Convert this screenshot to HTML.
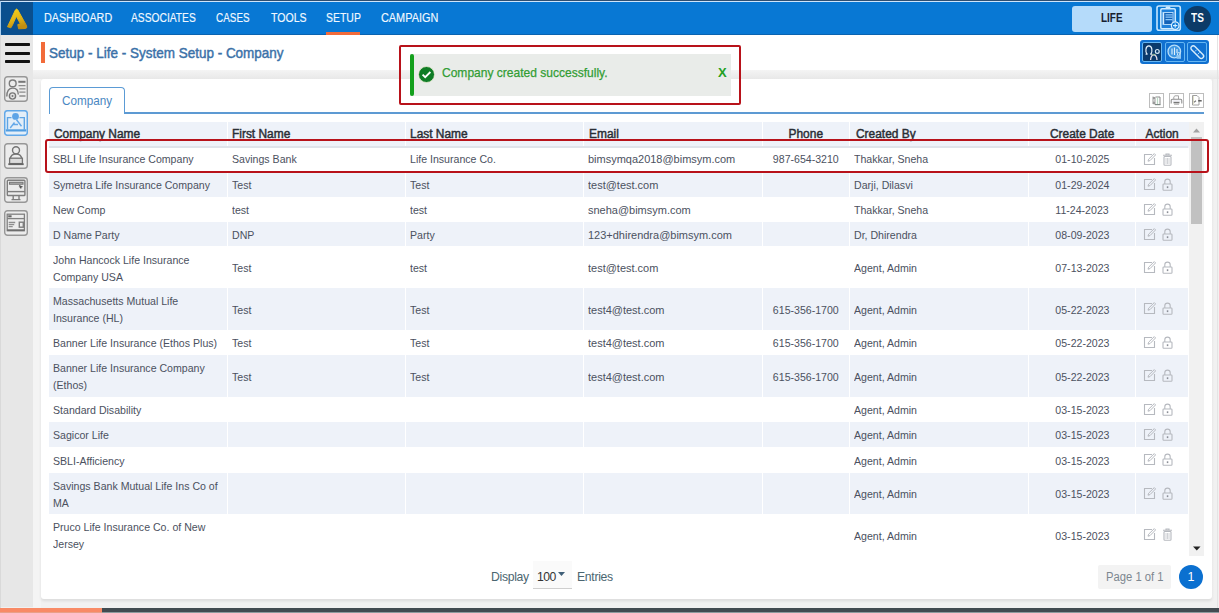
<!DOCTYPE html>
<html><head><meta charset="utf-8">
<style>
*{box-sizing:border-box}
html,body{margin:0;padding:0}
body{width:1219px;height:613px;overflow:hidden;position:relative;background:#f1f1f1;font-family:"Liberation Sans",sans-serif}
.abs{position:absolute}
#tl1{left:0;top:0;width:1219px;height:1px;background:#2f4f72}
#tl2{left:0;top:1px;width:1219px;height:1px;background:#cfe5fb}
#nav{left:0;top:2px;width:1219px;height:33px;background:linear-gradient(#0878d4 32px,#0a63b0 32px)}
#logo{left:1px;top:0;width:32px;height:33px;background:#0a4f8e;overflow:hidden}
.ni{position:absolute;top:8.8px;-webkit-text-stroke:0.15px #f2f8ff;color:#f2f8ff;font-size:12.3px;white-space:nowrap;line-height:14px;transform-origin:0 0}
#ul{left:326px;top:30px;width:34px;height:3px;background:#f26b3a}
#life{left:1072px;top:4px;width:80px;height:26px;background:#b5dbfa;border-radius:3px}
#lifet{left:1100.5px;top:8.7px;color:#15202e;font-weight:bold;font-size:12.3px;line-height:14px;transform:scaleX(0.81);transform-origin:0 0}
#clip{left:1156px;top:3px;width:24px;height:25px}
#ts{left:1184.3px;top:3.8px;width:26.6px;height:26.6px;border-radius:50%;background:#0c3b68}
#tst{left:1190.8px;top:8.7px;color:#fff;font-weight:bold;font-size:12.3px;line-height:14px;transform:scaleX(0.82);transform-origin:0 0}
#side{left:0;top:35px;width:33px;height:572px;background:#e7e7e7}
#sideb{left:33px;top:79px;width:8px;height:529px;background:#f4f4f4}
#hdr{left:33px;top:35px;width:1186px;height:35px;background:#fff}
#grad{left:33px;top:70px;width:1186px;height:9px;background:linear-gradient(#f4f4f4,#e8e8e8)}
.hb{position:absolute;left:5px;width:25px;height:3px;background:#111;border-radius:0.8px}
.sico{position:absolute;left:4px;width:24px;height:26px}
#obar{left:41px;top:42px;width:4px;height:21px;background:#f26b3a}
#title{left:48.5px;top:44.5px;color:#3b71a8;font-size:14.5px;-webkit-text-stroke:0.45px #3b71a8;white-space:nowrap;line-height:17px;transform:scaleX(0.93);transform-origin:0 0}
#grp{left:1140px;top:40px;width:69px;height:24px;background:#1070d0;border-radius:3px}
.gb{position:absolute;top:2px;width:20px;height:20px;border:1.5px solid #66b6f2;border-radius:2px}
#panel{left:41px;top:79px;width:1171px;height:519.5px;background:#fff;border-radius:3px;box-shadow:0 2px 3px rgba(0,0,0,0.09)}
#rshadow{left:1212px;top:79px;width:2px;height:519px;background:linear-gradient(90deg,#e9e9e9,#f0f0f0)}
#rline{left:1217px;top:35px;width:1px;height:573px;background:#e4e4e4}
#lline{left:0;top:35px;width:1px;height:573px;background:#d9d9d9}
#tab{left:49px;top:87px;width:76px;height:27px;border:1px solid #5b9bd5;border-bottom:none;border-radius:4px 4px 0 0;background:#fff}
#tabt{left:61.8px;top:93px;color:#4a87c2;font-size:13px;line-height:15px;transform:scaleX(0.9);transform-origin:0 0}
#tabline{left:124px;top:112px;width:1080px;height:1.6px;background:#5d9ad3}
.exp{position:absolute;top:93px;width:15px;height:15px;border:1.2px solid #bdbdbd}
#thead{left:49px;top:122px;width:1155px;height:26px;background:linear-gradient(90deg,#eef2f9 1140px,#f1f1f1 1140px)}
#thead .hsep{position:absolute;top:0;width:1px;height:24px;background:#fff}
#thead .hc{position:absolute;top:4.8px;font-size:12.3px;color:#2a2e35;-webkit-text-stroke:0.45px #2a2e35;white-space:nowrap;line-height:14px}
#thead .hc span{display:inline-block;transform:scaleX(0.97);transform-origin:0 50%}
#thead .hc.c span{transform-origin:50% 50%}
#thb{left:49px;top:146px;width:1139px;height:2px;background:#dfe3ea}
.row{position:absolute;left:49px;width:1139px}
.sep{position:absolute;top:0;width:1px;height:100%;background:#fff}
.cell{position:absolute;top:0;height:100%;display:flex;align-items:center;padding-left:3.5px;font-size:11.5px;color:#4b5160;line-height:17px;white-space:nowrap}
.cell span{display:inline-block;transform:scaleX(0.92);transform-origin:0 50%}
.cell.c span{transform-origin:50% 50%}
.cell.em span{transform:scaleX(0.955)}
.cell.c{justify-content:center;padding-left:0}
.cell.act{justify-content:flex-start;padding-left:6.6px}
.cell.act svg{margin-right:6.6px}
#track{left:1189px;top:122px;width:15px;height:434px;background:#f1f1f1}
#thumb{left:1191px;top:137.4px;width:11px;height:86.6px;background:#c1c1c1}
#redrow{left:45px;top:139px;width:1164px;height:34px;border:2px solid #b8121a;border-radius:3px}
#toastbox{left:399px;top:45px;width:342px;height:60px;border:2px solid #b8121a;border-radius:2px}
#toast{left:410px;top:54px;width:321px;height:42px;background:#e9ece9}
#tbar{left:410px;top:54px;width:4px;height:42px;background:#13a01c;border-radius:2px}
#tmsg{left:441.5px;top:66px;color:#329d34;-webkit-text-stroke:0.25px #329d34;font-size:12.6px;white-space:nowrap;line-height:14px;transform:scaleX(0.955);transform-origin:0 0}
#tx{left:718px;top:66px;color:#22a022;font-size:13px;font-weight:bold;line-height:14px}
#disp{left:491px;top:569.6px;color:#4b6670;font-size:12.2px;letter-spacing:-0.3px;white-space:nowrap;line-height:14px}
#sel{left:533px;top:561px;width:39px;height:28px;background:#fafafa;border-bottom:1px solid #cfcfcf}
#selt{left:537px;top:569.6px;color:#333;font-size:12.2px;letter-spacing:-0.5px;line-height:14px}
#entr{left:577px;top:569.6px;color:#4b6670;font-size:12.2px;letter-spacing:-0.3px;white-space:nowrap;line-height:14px}
#pg{left:1098px;top:565px;width:73px;height:24px;background:#f3f3f3;border-radius:2px}
#pgt{left:1106.2px;top:569.7px;color:#7d8790;font-size:12.3px;line-height:14px;white-space:nowrap;transform:scaleX(0.915);transform-origin:0 0}
#pn{left:1179.2px;top:565.2px;width:23.8px;height:24px;border-radius:50%;background:#0b70d0;color:#fff;font-size:12.5px;text-align:center;line-height:24px}
#bbar{left:0;top:608px;width:1219px;height:5px;background:linear-gradient(#424b51 3.6px,#8d9a9d 3.6px)}
#obot{left:0;top:608px;width:102px;height:5px;background:linear-gradient(#f88a66 3.6px,#e9a088 3.6px)}
</style></head>
<body>
<div id="tl1" class="abs"></div>
<div id="tl2" class="abs"></div>
<div class="abs" style="left:0;top:1px;width:1px;height:34px;background:#a9cdee;z-index:5"></div>
<div id="nav" class="abs">
  <div id="logo" class="abs">
    <svg width="32" height="33" viewBox="0 0 32 33" style="position:absolute;left:-1px;top:-2px"><defs><linearGradient id="lg" x1="0" y1="0" x2="0.3" y2="1"><stop offset="0" stop-color="#f6d21c"/><stop offset="0.6" stop-color="#e0b416"/><stop offset="1" stop-color="#c08d12"/></linearGradient></defs>
    <path d="M15.4 10 Q16.6 8.2 17.8 10 L26.6 25.8 Q27.6 28.4 25 28.5 L18.6 28.8 L17.8 24.6 L20.4 23.8 L16.3 16.2 L12.4 25.2 L10.9 27.8 L7.5 26.8 Z" fill="url(#lg)" stroke="url(#lg)" stroke-width="1" stroke-linejoin="round"/></svg>
  </div>
  <div class="ni" style="left:43.5px;transform:scaleX(0.875)">DASHBOARD</div>
  <div class="ni" style="left:131.3px;transform:scaleX(0.834)">ASSOCIATES</div>
  <div class="ni" style="left:216px;transform:scaleX(0.806)">CASES</div>
  <div class="ni" style="left:270.5px;transform:scaleX(0.86)">TOOLS</div>
  <div class="ni" style="left:325.5px;transform:scaleX(0.85)">SETUP</div>
  <div class="ni" style="left:380.8px;transform:scaleX(0.885)">CAMPAIGN</div>
  <div id="ul" class="abs"></div>
  <div id="life" class="abs"></div><div id="lifet" class="abs">LIFE</div>
  <div id="clip" class="abs">
    <svg width="26" height="27" viewBox="0 0 26 27" style="position:absolute;left:-0.2px;top:0px"><rect x="1" y="1" width="23.3" height="24.3" rx="2" fill="none" stroke="#c6e6ff" stroke-width="1.6"/><rect x="4.8" y="3.8" width="14.5" height="20" rx="1.2" fill="#1f80da" stroke="#cdeaff" stroke-width="1.5"/><path d="M9 3.7h6l-1.2-2.2h-3.6z" fill="#cdeaff"/><rect x="7" y="7.5" width="10" height="12" fill="#1262b8" stroke="#bfe1fc" stroke-width="0.9"/><path d="M7.6 8v11" stroke="#d6ecff" stroke-width="1.2"/><path d="M9.5 9.8h7M9.5 12.2h7M9.5 14.6h7" stroke="#8ec8f8" stroke-width="1.2"/><circle cx="19.2" cy="20.6" r="3.8" fill="#0b79d8" stroke="#d8efff" stroke-width="1.3"/><path d="M19.2 18.4v4.4M17 20.6h4.4" stroke="#d8efff" stroke-width="1.1"/></svg>
  </div>
  <div id="ts" class="abs"></div><div id="tst" class="abs">TS</div>
</div>
<div id="side" class="abs">
  <div class="hb" style="top:8px"></div>
  <div class="hb" style="top:17px"></div>
  <div class="hb" style="top:25px"></div>
  <!-- icon 1 -->
  <svg class="sico" style="top:41px" viewBox="0 0 24 26"><rect x="0.7" y="0.7" width="22.6" height="24.6" rx="2.8" fill="#ececec" stroke="#979797" stroke-width="1.4"/><circle cx="8.7" cy="7.4" r="3.4" fill="none" stroke="#7c7c7c" stroke-width="1.4"/><path d="M2.8 20.5c0-5.5 2.4-8.4 5.9-8.4s5.6 2.6 5.6 6.4" fill="none" stroke="#7c7c7c" stroke-width="1.4"/><circle cx="8.5" cy="20" r="3.1" fill="#e4e4e4" stroke="#767676" stroke-width="1.4"/><circle cx="8.5" cy="20" r="1" fill="#767676"/><path d="M14.3 5.8h7.2" stroke="#777" stroke-width="2"/><path d="M14.5 9.7h7M15.3 12.9h6.2M15.3 16.2h6.2M15.3 20h6.2" stroke="#8a8a8a" stroke-width="1.3"/></svg>
  <!-- icon 2 -->
  <svg class="sico" style="top:75px" viewBox="0 0 24 26"><rect x="0.7" y="0.7" width="22.6" height="24.6" rx="2.8" fill="#e3eef8" stroke="#62a8e8" stroke-width="1.5"/><path d="M7.5 7.6H3.5v12M15.5 7.6h4.8v12" fill="none" stroke="#5fa5e4" stroke-width="1.4"/><path d="M1.8 20.4h20.4" stroke="#4f9ce0" stroke-width="2.2"/><circle cx="11.5" cy="6.4" r="3.4" fill="#5ea4e6"/><path d="M6.2 18l4.3-5.5M12.5 9.8l5 6.5M9 14.5h5" fill="none" stroke="#64a8e8" stroke-width="1.4"/></svg>
  <!-- icon 3 -->
  <svg class="sico" style="top:108px" viewBox="0 0 24 26"><rect x="0.7" y="0.7" width="22.6" height="24.6" rx="2.8" fill="#ececec" stroke="#979797" stroke-width="1.4"/><circle cx="12" cy="7.3" r="3.5" fill="none" stroke="#747474" stroke-width="1.4"/><path d="M6.2 16c.3-3 2.5-5 5.8-5s5.5 2 5.8 5" fill="none" stroke="#747474" stroke-width="1.4"/><rect x="5.6" y="15.2" width="12.8" height="5.4" fill="#dcdcdc" stroke="#747474" stroke-width="1.3"/><path d="M4.3 21.2h15.4" stroke="#666" stroke-width="1.8"/></svg>
  <!-- icon 4 -->
  <svg class="sico" style="top:142px" viewBox="0 0 24 26"><rect x="0.7" y="0.7" width="22.6" height="24.6" rx="2.8" fill="#ececec" stroke="#979797" stroke-width="1.4"/><rect x="3.3" y="3.2" width="17.6" height="15.3" rx="0.8" fill="none" stroke="#7e7e7e" stroke-width="1.4"/><rect x="5.5" y="5.3" width="13.5" height="1.9" fill="#bbb" stroke="#777" stroke-width="1.1"/><path d="M3.3 14.6h17.6" stroke="#7e7e7e" stroke-width="1.4"/><path d="M9.2 18.5v3.8M15 18.5v3.8M7.5 22.6h9" fill="none" stroke="#7e7e7e" stroke-width="1.4"/><path d="M15 8.6l2.4 1.2-1 .5.9 1.1" fill="none" stroke="#555" stroke-width="1.5"/></svg>
  <!-- icon 5 -->
  <svg class="sico" style="top:175px" viewBox="0 0 24 26"><rect x="0.7" y="0.7" width="22.6" height="24.6" rx="2.8" fill="#ececec" stroke="#979797" stroke-width="1.4"/><rect x="3.2" y="4.2" width="17.2" height="16.5" fill="none" stroke="#808080" stroke-width="1.3"/><path d="M3.2 8.6h17.2" stroke="#808080" stroke-width="1.3"/><path d="M4.2 6.3h3.4" stroke="#666" stroke-width="2"/><path d="M4.7 12.5h6.5M4.7 14.6h5.5M4.7 16.7h4" stroke="#8e8e8e" stroke-width="1.3"/><rect x="15.3" y="12.2" width="4" height="5" fill="none" stroke="#7e7e7e" stroke-width="1.4"/><path d="M3.2 20.2h17.2" stroke="#6e6e6e" stroke-width="1.8"/></svg>
</div>
<div id="hdr" class="abs"></div>
<div id="grad" class="abs"></div>
<div id="sideb" class="abs"></div>
<div id="obar" class="abs"></div>
<div id="title" class="abs">Setup - Life - System Setup - Company</div>
<div id="grp" class="abs">
  <div class="gb" style="left:2px;background:#0b3a6c">
    <svg width="18" height="18" viewBox="0 0 18 18" style="position:absolute;left:0;top:0"><path d="M4 10.8C2.2 8.8 2.4 2.8 5.9 2.8s3.7 6 1.9 8M2.6 11.2h2M7.2 11.2h2" fill="none" stroke="#e6f1fa" stroke-width="1.2"/><circle cx="14.3" cy="8.4" r="1.9" fill="none" stroke="#d6e8f6" stroke-width="1.2"/><path d="M7.6 17c.2-3.2 1.5-5.2 3.2-5.2s3 2 3.2 5.2" fill="none" stroke="#eadfe8" stroke-width="1.3"/><path d="M9.5 12l1.3-.8 1.6.6" stroke="#9ccf9c" stroke-width="1"/></svg>
  </div>
  <div class="gb" style="left:24.5px">
    <svg width="18" height="18" viewBox="0 0 18 18" style="position:absolute;left:0;top:0"><circle cx="8.3" cy="8.5" r="6.3" fill="#3e96e2" stroke="#b8ddf8" stroke-width="1.3"/><path d="M6 5.5v6M8.5 4.5v7.5M11 6v4" stroke="#dff0fc" stroke-width="1.1"/><rect x="10.5" y="12" width="4.5" height="3.8" fill="#8fc6f2"/><path d="M11.5 12v-1.2a1.3 1.3 0 0 1 2.6 0V12" fill="none" stroke="#c8e4fa" stroke-width="1"/></svg>
  </div>
  <div class="gb" style="left:46.5px">
    <svg width="18" height="18" viewBox="0 0 18 18" style="position:absolute;left:0;top:0"><path d="M3.6 3.4a2.3 2.3 0 0 1 3.3 0l8 8a2.3 2.3 0 0 1-3.3 3.3l-8-8a2.3 2.3 0 0 1 0-3.3z" fill="none" stroke="#d8ecfb" stroke-width="1.4"/><path d="M6.8 8.6l2-2M9.6 11.4l2-2" stroke="#a9d3f5" stroke-width="1"/></svg>
  </div>
</div>
<div id="panel" class="abs"></div>
<div id="rshadow" class="abs"></div><div id="rline" class="abs"></div><div id="lline" class="abs"></div>
<div id="tabline" class="abs"></div>
<div id="tab" class="abs"></div><div id="tabt" class="abs">Company</div>
<div class="exp" style="left:1149px">
  <svg width="13" height="13" viewBox="0 0 13 13" style="position:absolute;left:0;top:0"><path d="M2.5 2.5l3 .8v7.5l-3-.8z" fill="#9a9a9a"/><path d="M5.5 3h4.5v7.5H5.5" fill="none" stroke="#8a8a8a" stroke-width="1"/><path d="M7.5 3.5v6.5" stroke="#b9d8c4" stroke-width="1.2"/><path d="M3.2 5.2l1.5 2.5M4.7 5.2l-1.5 2.5" stroke="#eee" stroke-width="0.7"/><path d="M5 10.6h5.5" stroke="#7f8a86" stroke-width="1.2"/></svg>
</div>
<div class="exp" style="left:1169px">
  <svg width="13" height="13" viewBox="0 0 13 13" style="position:absolute;left:0;top:0"><path d="M3.8 5V2.8l1.2-1h3.5V5" fill="none" stroke="#a5a5a5" stroke-width="1"/><path d="M1.2 9.5V6.5a1.2 1.2 0 0 1 1.2-1.2h8.2a1.2 1.2 0 0 1 1.2 1.2v3" fill="none" stroke="#8f8f8f" stroke-width="1.1"/><path d="M2.5 7h8" stroke="#e4e4ee" stroke-width="1"/><path d="M3.5 8.6h6" stroke="#777" stroke-width="1.5"/><path d="M4 10.2h5" stroke="#aaa" stroke-width="1"/></svg>
</div>
<div class="exp" style="left:1189px">
  <svg width="13" height="13" viewBox="0 0 13 13" style="position:absolute;left:0;top:0"><path d="M2.5 1.5h4.5l2 2v7.5h-6.5z" fill="none" stroke="#a0a0a0" stroke-width="1"/><path d="M3.5 2v8.5" stroke="#e0e0c8" stroke-width="1"/><path d="M4 8.2l2-1.5" stroke="#777" stroke-width="1.1"/><path d="M8.2 6.8h3.5" stroke="#555" stroke-width="1.4"/></svg>
</div>
<div id="track" class="abs"></div>
<div id="thead" class="abs">
  <div class="hsep" style="left:178px"></div>
  <div class="hsep" style="left:356px"></div>
  <div class="hsep" style="left:534px"></div>
  <div class="hsep" style="left:713px"></div>
  <div class="hsep" style="left:800px"></div>
  <div class="hsep" style="left:979px"></div>
  <div class="hsep" style="left:1086px"></div>
  <div class="hc" style="left:4.5px"><span>Company Name</span></div>
  <div class="hc" style="left:183px"><span>First Name</span></div>
  <div class="hc" style="left:361px"><span>Last Name</span></div>
  <div class="hc" style="left:539.5px"><span>Email</span></div>
  <div class="hc c" style="left:714px;width:86px;text-align:center"><span>Phone</span></div>
  <div class="hc" style="left:806.5px"><span>Created By</span></div>
  <div class="hc c" style="left:980px;width:106px;text-align:center"><span>Create Date</span></div>
  <div class="hc c" style="left:1087px;width:52px;text-align:center"><span>Action</span></div>
  <svg style="position:absolute;left:1144px;top:5.8px" width="7" height="5" viewBox="0 0 7 5"><path d="M0 4.5L3.5 0.5 7 4.5z" fill="#a3a3a3"/></svg>
</div>
<div id="thb" class="abs"></div>
<div id="thumb" class="abs"></div>
<div class="row" style="top:148.00px;height:24.80px;background:#ffffff"><div class="cell" style="left:0px;width:178px;top:-0.6px"><span>SBLI Life Insurance Company</span></div><div class="cell" style="left:179px;width:177px;top:-0.6px"><span>Savings Bank</span></div><div class="cell" style="left:357px;width:177px;top:-0.6px"><span>Life Insurance Co.</span></div><div class="cell em" style="left:535px;width:178px;top:-0.6px"><span>bimsymqa2018@bimsym.com</span></div><div class="cell c" style="left:714px;width:86px;top:-0.6px"><span>987-654-3210</span></div><div class="cell" style="left:801px;width:178px;top:-0.6px"><span>Thakkar, Sneha</span></div><div class="cell c" style="left:980px;width:106px;top:-0.6px"><span>01-10-2025</span></div><div class="cell act" style="left:1087px;width:52px;top:-1.2px"><svg width="13" height="13" viewBox="0 0 13 13"><path d="M9 1.5H1.5v10h10V5" fill="none" stroke="#b6b9bf" stroke-width="1.1"/><path d="M5 8.2l.6-2L11.3.6l1.3 1.3L7 7.6z" fill="none" stroke="#b6b9bf" stroke-width="1"/></svg><svg width="11" height="13" viewBox="0 0 11 13"><path d="M1 2.3h9M4 2.2V1h3v1.2" fill="none" stroke="#b6b9bf" stroke-width="1.1"/><rect x="2" y="3.5" width="7" height="8.8" rx="0.8" fill="none" stroke="#b6b9bf" stroke-width="1.1"/><path d="M4 5v6M5.5 5v6M7 5v6" stroke="#c4c7cc" stroke-width="0.8"/></svg></div></div>
<div class="row" style="top:172.80px;height:24.40px;background:#eef2f9"><div class="sep" style="left:178px"></div><div class="sep" style="left:356px"></div><div class="sep" style="left:534px"></div><div class="sep" style="left:713px"></div><div class="sep" style="left:800px"></div><div class="sep" style="left:979px"></div><div class="sep" style="left:1086px"></div><div class="cell" style="left:0px;width:178px;top:0.3px"><span>Symetra Life Insurance Company</span></div><div class="cell" style="left:179px;width:177px;top:0.3px"><span>Test</span></div><div class="cell" style="left:357px;width:177px;top:0.3px"><span>Test</span></div><div class="cell em" style="left:535px;width:178px;top:0.3px"><span>test@test.com</span></div><div class="cell c" style="left:714px;width:86px;top:0.3px"><span></span></div><div class="cell" style="left:801px;width:178px;top:0.3px"><span>Darji, Dilasvi</span></div><div class="cell c" style="left:980px;width:106px;top:0.3px"><span>01-29-2024</span></div><div class="cell act" style="left:1087px;width:52px;top:-0.3px"><svg width="13" height="13" viewBox="0 0 13 13"><path d="M9 1.5H1.5v10h10V5" fill="none" stroke="#b6b9bf" stroke-width="1.1"/><path d="M5 8.2l.6-2L11.3.6l1.3 1.3L7 7.6z" fill="none" stroke="#b6b9bf" stroke-width="1"/></svg><svg width="11" height="13" viewBox="0 0 11 13"><path d="M2.8 6V3.8a2.7 2.7 0 0 1 5.4 0V6" fill="none" stroke="#b6b9bf" stroke-width="1.1"/><rect x="1" y="6" width="9" height="6.3" rx="0.8" fill="none" stroke="#b6b9bf" stroke-width="1.1"/><rect x="4.8" y="8.3" width="1.5" height="1.8" fill="#8a8e96"/></svg></div></div>
<div class="row" style="top:197.20px;height:25.00px;background:#ffffff"><div class="cell" style="left:0px;width:178px;top:0.8px"><span>New Comp</span></div><div class="cell" style="left:179px;width:177px;top:0.8px"><span>test</span></div><div class="cell" style="left:357px;width:177px;top:0.8px"><span>test</span></div><div class="cell em" style="left:535px;width:178px;top:0.8px"><span>sneha@bimsym.com</span></div><div class="cell c" style="left:714px;width:86px;top:0.8px"><span></span></div><div class="cell" style="left:801px;width:178px;top:0.8px"><span>Thakkar, Sneha</span></div><div class="cell c" style="left:980px;width:106px;top:0.8px"><span>11-24-2023</span></div><div class="cell act" style="left:1087px;width:52px;top:-0.3px"><svg width="13" height="13" viewBox="0 0 13 13"><path d="M9 1.5H1.5v10h10V5" fill="none" stroke="#b6b9bf" stroke-width="1.1"/><path d="M5 8.2l.6-2L11.3.6l1.3 1.3L7 7.6z" fill="none" stroke="#b6b9bf" stroke-width="1"/></svg><svg width="11" height="13" viewBox="0 0 11 13"><path d="M2.8 6V3.8a2.7 2.7 0 0 1 5.4 0V6" fill="none" stroke="#b6b9bf" stroke-width="1.1"/><rect x="1" y="6" width="9" height="6.3" rx="0.8" fill="none" stroke="#b6b9bf" stroke-width="1.1"/><rect x="4.8" y="8.3" width="1.5" height="1.8" fill="#8a8e96"/></svg></div></div>
<div class="row" style="top:222.20px;height:24.30px;background:#eef2f9"><div class="sep" style="left:178px"></div><div class="sep" style="left:356px"></div><div class="sep" style="left:534px"></div><div class="sep" style="left:713px"></div><div class="sep" style="left:800px"></div><div class="sep" style="left:979px"></div><div class="sep" style="left:1086px"></div><div class="cell" style="left:0px;width:178px;top:0.8px"><span>D Name Party</span></div><div class="cell" style="left:179px;width:177px;top:0.8px"><span>DNP</span></div><div class="cell" style="left:357px;width:177px;top:0.8px"><span>Party</span></div><div class="cell em" style="left:535px;width:178px;top:0.8px"><span>123+dhirendra@bimsym.com</span></div><div class="cell c" style="left:714px;width:86px;top:0.8px"><span></span></div><div class="cell" style="left:801px;width:178px;top:0.8px"><span>Dr, Dhirendra</span></div><div class="cell c" style="left:980px;width:106px;top:0.8px"><span>08-09-2023</span></div><div class="cell act" style="left:1087px;width:52px;top:-0.3px"><svg width="13" height="13" viewBox="0 0 13 13"><path d="M9 1.5H1.5v10h10V5" fill="none" stroke="#b6b9bf" stroke-width="1.1"/><path d="M5 8.2l.6-2L11.3.6l1.3 1.3L7 7.6z" fill="none" stroke="#b6b9bf" stroke-width="1"/></svg><svg width="11" height="13" viewBox="0 0 11 13"><path d="M2.8 6V3.8a2.7 2.7 0 0 1 5.4 0V6" fill="none" stroke="#b6b9bf" stroke-width="1.1"/><rect x="1" y="6" width="9" height="6.3" rx="0.8" fill="none" stroke="#b6b9bf" stroke-width="1.1"/><rect x="4.8" y="8.3" width="1.5" height="1.8" fill="#8a8e96"/></svg></div></div>
<div class="row" style="top:246.50px;height:41.90px;background:#ffffff"><div class="cell" style="left:0px;width:178px;top:1.2px"><span>John Hancock Life Insurance<br>Company USA</span></div><div class="cell" style="left:179px;width:177px;top:1.2px"><span>Test</span></div><div class="cell" style="left:357px;width:177px;top:1.2px"><span>test</span></div><div class="cell em" style="left:535px;width:178px;top:1.2px"><span>test@test.com</span></div><div class="cell c" style="left:714px;width:86px;top:1.2px"><span></span></div><div class="cell" style="left:801px;width:178px;top:1.2px"><span>Agent, Admin</span></div><div class="cell c" style="left:980px;width:106px;top:1.2px"><span>07-13-2023</span></div><div class="cell act" style="left:1087px;width:52px;top:-0.3px"><svg width="13" height="13" viewBox="0 0 13 13"><path d="M9 1.5H1.5v10h10V5" fill="none" stroke="#b6b9bf" stroke-width="1.1"/><path d="M5 8.2l.6-2L11.3.6l1.3 1.3L7 7.6z" fill="none" stroke="#b6b9bf" stroke-width="1"/></svg><svg width="11" height="13" viewBox="0 0 11 13"><path d="M2.8 6V3.8a2.7 2.7 0 0 1 5.4 0V6" fill="none" stroke="#b6b9bf" stroke-width="1.1"/><rect x="1" y="6" width="9" height="6.3" rx="0.8" fill="none" stroke="#b6b9bf" stroke-width="1.1"/><rect x="4.8" y="8.3" width="1.5" height="1.8" fill="#8a8e96"/></svg></div></div>
<div class="row" style="top:288.40px;height:41.80px;background:#eef2f9"><div class="sep" style="left:178px"></div><div class="sep" style="left:356px"></div><div class="sep" style="left:534px"></div><div class="sep" style="left:713px"></div><div class="sep" style="left:800px"></div><div class="sep" style="left:979px"></div><div class="sep" style="left:1086px"></div><div class="cell" style="left:0px;width:178px;top:1.2px"><span>Massachusetts Mutual Life<br>Insurance (HL)</span></div><div class="cell" style="left:179px;width:177px;top:1.2px"><span>Test</span></div><div class="cell" style="left:357px;width:177px;top:1.2px"><span>Test</span></div><div class="cell em" style="left:535px;width:178px;top:1.2px"><span>test4@test.com</span></div><div class="cell c" style="left:714px;width:86px;top:1.2px"><span>615-356-1700</span></div><div class="cell" style="left:801px;width:178px;top:1.2px"><span>Agent, Admin</span></div><div class="cell c" style="left:980px;width:106px;top:1.2px"><span>05-22-2023</span></div><div class="cell act" style="left:1087px;width:52px;top:-0.3px"><svg width="13" height="13" viewBox="0 0 13 13"><path d="M9 1.5H1.5v10h10V5" fill="none" stroke="#b6b9bf" stroke-width="1.1"/><path d="M5 8.2l.6-2L11.3.6l1.3 1.3L7 7.6z" fill="none" stroke="#b6b9bf" stroke-width="1"/></svg><svg width="11" height="13" viewBox="0 0 11 13"><path d="M2.8 6V3.8a2.7 2.7 0 0 1 5.4 0V6" fill="none" stroke="#b6b9bf" stroke-width="1.1"/><rect x="1" y="6" width="9" height="6.3" rx="0.8" fill="none" stroke="#b6b9bf" stroke-width="1.1"/><rect x="4.8" y="8.3" width="1.5" height="1.8" fill="#8a8e96"/></svg></div></div>
<div class="row" style="top:330.20px;height:24.80px;background:#ffffff"><div class="cell" style="left:0px;width:178px;top:1.2px"><span>Banner Life Insurance (Ethos Plus)</span></div><div class="cell" style="left:179px;width:177px;top:1.2px"><span>Test</span></div><div class="cell" style="left:357px;width:177px;top:1.2px"><span>Test</span></div><div class="cell em" style="left:535px;width:178px;top:1.2px"><span>test4@test.com</span></div><div class="cell c" style="left:714px;width:86px;top:1.2px"><span>615-356-1700</span></div><div class="cell" style="left:801px;width:178px;top:1.2px"><span>Agent, Admin</span></div><div class="cell c" style="left:980px;width:106px;top:1.2px"><span>05-22-2023</span></div><div class="cell act" style="left:1087px;width:52px;top:-0.3px"><svg width="13" height="13" viewBox="0 0 13 13"><path d="M9 1.5H1.5v10h10V5" fill="none" stroke="#b6b9bf" stroke-width="1.1"/><path d="M5 8.2l.6-2L11.3.6l1.3 1.3L7 7.6z" fill="none" stroke="#b6b9bf" stroke-width="1"/></svg><svg width="11" height="13" viewBox="0 0 11 13"><path d="M2.8 6V3.8a2.7 2.7 0 0 1 5.4 0V6" fill="none" stroke="#b6b9bf" stroke-width="1.1"/><rect x="1" y="6" width="9" height="6.3" rx="0.8" fill="none" stroke="#b6b9bf" stroke-width="1.1"/><rect x="4.8" y="8.3" width="1.5" height="1.8" fill="#8a8e96"/></svg></div></div>
<div class="row" style="top:355.00px;height:41.80px;background:#eef2f9"><div class="sep" style="left:178px"></div><div class="sep" style="left:356px"></div><div class="sep" style="left:534px"></div><div class="sep" style="left:713px"></div><div class="sep" style="left:800px"></div><div class="sep" style="left:979px"></div><div class="sep" style="left:1086px"></div><div class="cell" style="left:0px;width:178px;top:1.2px"><span>Banner Life Insurance Company<br>(Ethos)</span></div><div class="cell" style="left:179px;width:177px;top:1.2px"><span>Test</span></div><div class="cell" style="left:357px;width:177px;top:1.2px"><span>Test</span></div><div class="cell em" style="left:535px;width:178px;top:1.2px"><span>test4@test.com</span></div><div class="cell c" style="left:714px;width:86px;top:1.2px"><span>615-356-1700</span></div><div class="cell" style="left:801px;width:178px;top:1.2px"><span>Agent, Admin</span></div><div class="cell c" style="left:980px;width:106px;top:1.2px"><span>05-22-2023</span></div><div class="cell act" style="left:1087px;width:52px;top:-0.3px"><svg width="13" height="13" viewBox="0 0 13 13"><path d="M9 1.5H1.5v10h10V5" fill="none" stroke="#b6b9bf" stroke-width="1.1"/><path d="M5 8.2l.6-2L11.3.6l1.3 1.3L7 7.6z" fill="none" stroke="#b6b9bf" stroke-width="1"/></svg><svg width="11" height="13" viewBox="0 0 11 13"><path d="M2.8 6V3.8a2.7 2.7 0 0 1 5.4 0V6" fill="none" stroke="#b6b9bf" stroke-width="1.1"/><rect x="1" y="6" width="9" height="6.3" rx="0.8" fill="none" stroke="#b6b9bf" stroke-width="1.1"/><rect x="4.8" y="8.3" width="1.5" height="1.8" fill="#8a8e96"/></svg></div></div>
<div class="row" style="top:396.80px;height:25.20px;background:#ffffff"><div class="cell" style="left:0px;width:178px;top:1.2px"><span>Standard Disability</span></div><div class="cell" style="left:179px;width:177px;top:1.2px"><span></span></div><div class="cell" style="left:357px;width:177px;top:1.2px"><span></span></div><div class="cell em" style="left:535px;width:178px;top:1.2px"><span></span></div><div class="cell c" style="left:714px;width:86px;top:1.2px"><span></span></div><div class="cell" style="left:801px;width:178px;top:1.2px"><span>Agent, Admin</span></div><div class="cell c" style="left:980px;width:106px;top:1.2px"><span>03-15-2023</span></div><div class="cell act" style="left:1087px;width:52px;top:-0.3px"><svg width="13" height="13" viewBox="0 0 13 13"><path d="M9 1.5H1.5v10h10V5" fill="none" stroke="#b6b9bf" stroke-width="1.1"/><path d="M5 8.2l.6-2L11.3.6l1.3 1.3L7 7.6z" fill="none" stroke="#b6b9bf" stroke-width="1"/></svg><svg width="11" height="13" viewBox="0 0 11 13"><path d="M2.8 6V3.8a2.7 2.7 0 0 1 5.4 0V6" fill="none" stroke="#b6b9bf" stroke-width="1.1"/><rect x="1" y="6" width="9" height="6.3" rx="0.8" fill="none" stroke="#b6b9bf" stroke-width="1.1"/><rect x="4.8" y="8.3" width="1.5" height="1.8" fill="#8a8e96"/></svg></div></div>
<div class="row" style="top:422.00px;height:25.30px;background:#eef2f9"><div class="sep" style="left:178px"></div><div class="sep" style="left:356px"></div><div class="sep" style="left:534px"></div><div class="sep" style="left:713px"></div><div class="sep" style="left:800px"></div><div class="sep" style="left:979px"></div><div class="sep" style="left:1086px"></div><div class="cell" style="left:0px;width:178px;top:1.2px"><span>Sagicor Life</span></div><div class="cell" style="left:179px;width:177px;top:1.2px"><span></span></div><div class="cell" style="left:357px;width:177px;top:1.2px"><span></span></div><div class="cell em" style="left:535px;width:178px;top:1.2px"><span></span></div><div class="cell c" style="left:714px;width:86px;top:1.2px"><span></span></div><div class="cell" style="left:801px;width:178px;top:1.2px"><span>Agent, Admin</span></div><div class="cell c" style="left:980px;width:106px;top:1.2px"><span>03-15-2023</span></div><div class="cell act" style="left:1087px;width:52px;top:-0.3px"><svg width="13" height="13" viewBox="0 0 13 13"><path d="M9 1.5H1.5v10h10V5" fill="none" stroke="#b6b9bf" stroke-width="1.1"/><path d="M5 8.2l.6-2L11.3.6l1.3 1.3L7 7.6z" fill="none" stroke="#b6b9bf" stroke-width="1"/></svg><svg width="11" height="13" viewBox="0 0 11 13"><path d="M2.8 6V3.8a2.7 2.7 0 0 1 5.4 0V6" fill="none" stroke="#b6b9bf" stroke-width="1.1"/><rect x="1" y="6" width="9" height="6.3" rx="0.8" fill="none" stroke="#b6b9bf" stroke-width="1.1"/><rect x="4.8" y="8.3" width="1.5" height="1.8" fill="#8a8e96"/></svg></div></div>
<div class="row" style="top:447.30px;height:25.30px;background:#ffffff"><div class="cell" style="left:0px;width:178px;top:1.2px"><span>SBLI-Afficiency</span></div><div class="cell" style="left:179px;width:177px;top:1.2px"><span></span></div><div class="cell" style="left:357px;width:177px;top:1.2px"><span></span></div><div class="cell em" style="left:535px;width:178px;top:1.2px"><span></span></div><div class="cell c" style="left:714px;width:86px;top:1.2px"><span></span></div><div class="cell" style="left:801px;width:178px;top:1.2px"><span>Agent, Admin</span></div><div class="cell c" style="left:980px;width:106px;top:1.2px"><span>03-15-2023</span></div><div class="cell act" style="left:1087px;width:52px;top:-0.3px"><svg width="13" height="13" viewBox="0 0 13 13"><path d="M9 1.5H1.5v10h10V5" fill="none" stroke="#b6b9bf" stroke-width="1.1"/><path d="M5 8.2l.6-2L11.3.6l1.3 1.3L7 7.6z" fill="none" stroke="#b6b9bf" stroke-width="1"/></svg><svg width="11" height="13" viewBox="0 0 11 13"><path d="M2.8 6V3.8a2.7 2.7 0 0 1 5.4 0V6" fill="none" stroke="#b6b9bf" stroke-width="1.1"/><rect x="1" y="6" width="9" height="6.3" rx="0.8" fill="none" stroke="#b6b9bf" stroke-width="1.1"/><rect x="4.8" y="8.3" width="1.5" height="1.8" fill="#8a8e96"/></svg></div></div>
<div class="row" style="top:472.60px;height:41.70px;background:#eef2f9"><div class="sep" style="left:178px"></div><div class="sep" style="left:356px"></div><div class="sep" style="left:534px"></div><div class="sep" style="left:713px"></div><div class="sep" style="left:800px"></div><div class="sep" style="left:979px"></div><div class="sep" style="left:1086px"></div><div class="cell" style="left:0px;width:178px;top:1.2px"><span>Savings Bank Mutual Life Ins Co of<br>MA</span></div><div class="cell" style="left:179px;width:177px;top:1.2px"><span></span></div><div class="cell" style="left:357px;width:177px;top:1.2px"><span></span></div><div class="cell em" style="left:535px;width:178px;top:1.2px"><span></span></div><div class="cell c" style="left:714px;width:86px;top:1.2px"><span></span></div><div class="cell" style="left:801px;width:178px;top:1.2px"><span>Agent, Admin</span></div><div class="cell c" style="left:980px;width:106px;top:1.2px"><span>03-15-2023</span></div><div class="cell act" style="left:1087px;width:52px;top:-0.3px"><svg width="13" height="13" viewBox="0 0 13 13"><path d="M9 1.5H1.5v10h10V5" fill="none" stroke="#b6b9bf" stroke-width="1.1"/><path d="M5 8.2l.6-2L11.3.6l1.3 1.3L7 7.6z" fill="none" stroke="#b6b9bf" stroke-width="1"/></svg><svg width="11" height="13" viewBox="0 0 11 13"><path d="M2.8 6V3.8a2.7 2.7 0 0 1 5.4 0V6" fill="none" stroke="#b6b9bf" stroke-width="1.1"/><rect x="1" y="6" width="9" height="6.3" rx="0.8" fill="none" stroke="#b6b9bf" stroke-width="1.1"/><rect x="4.8" y="8.3" width="1.5" height="1.8" fill="#8a8e96"/></svg></div></div>
<div class="row" style="top:514.30px;height:41.70px;background:#ffffff"><div class="cell" style="left:0px;width:178px;top:1.2px"><span>Pruco Life Insurance Co. of New<br>Jersey</span></div><div class="cell" style="left:179px;width:177px;top:1.2px"><span></span></div><div class="cell" style="left:357px;width:177px;top:1.2px"><span></span></div><div class="cell em" style="left:535px;width:178px;top:1.2px"><span></span></div><div class="cell c" style="left:714px;width:86px;top:1.2px"><span></span></div><div class="cell" style="left:801px;width:178px;top:1.2px"><span>Agent, Admin</span></div><div class="cell c" style="left:980px;width:106px;top:1.2px"><span>03-15-2023</span></div><div class="cell act" style="left:1087px;width:52px;top:-0.3px"><svg width="13" height="13" viewBox="0 0 13 13"><path d="M9 1.5H1.5v10h10V5" fill="none" stroke="#b6b9bf" stroke-width="1.1"/><path d="M5 8.2l.6-2L11.3.6l1.3 1.3L7 7.6z" fill="none" stroke="#b6b9bf" stroke-width="1"/></svg><svg width="11" height="13" viewBox="0 0 11 13"><path d="M1 2.3h9M4 2.2V1h3v1.2" fill="none" stroke="#b6b9bf" stroke-width="1.1"/><rect x="2" y="3.5" width="7" height="8.8" rx="0.8" fill="none" stroke="#b6b9bf" stroke-width="1.1"/><path d="M4 5v6M5.5 5v6M7 5v6" stroke="#c4c7cc" stroke-width="0.8"/></svg></div></div>
<svg class="abs" style="left:1193px;top:546px" width="8" height="5" viewBox="0 0 8 5"><path d="M0 0.5h7.5L3.75 4.5z" fill="#222"/></svg>
<div id="redrow" class="abs"></div>
<div id="toastbox" class="abs"></div>
<div id="toast" class="abs"></div>
<div id="tbar" class="abs"></div>
<svg class="abs" style="left:418px;top:66px" width="17" height="17" viewBox="0 0 17 17"><circle cx="8.5" cy="8.5" r="8" fill="#0f7d26" stroke="#f3f0d8" stroke-width="0.8"/><path d="M4.6 8.6l2.6 2.6 5.2-5.2" fill="none" stroke="#fff" stroke-width="1.8"/></svg>
<div id="tmsg" class="abs">Company created successfully.</div>
<div id="tx" class="abs">X</div>
<div id="disp" class="abs">Display</div>
<div id="sel" class="abs"></div>
<div id="selt" class="abs">100</div>
<svg class="abs" style="left:558px;top:572px" width="7" height="4" viewBox="0 0 7 4"><path d="M0 0h7L3.5 4z" fill="#3f5f78"/></svg>
<div id="entr" class="abs">Entries</div>
<div id="pg" class="abs"></div><div id="pgt" class="abs">Page 1 of 1</div>
<div id="pn" class="abs">1</div>
<div id="bbar" class="abs"></div>
<div id="obot" class="abs"></div>
</body></html>
